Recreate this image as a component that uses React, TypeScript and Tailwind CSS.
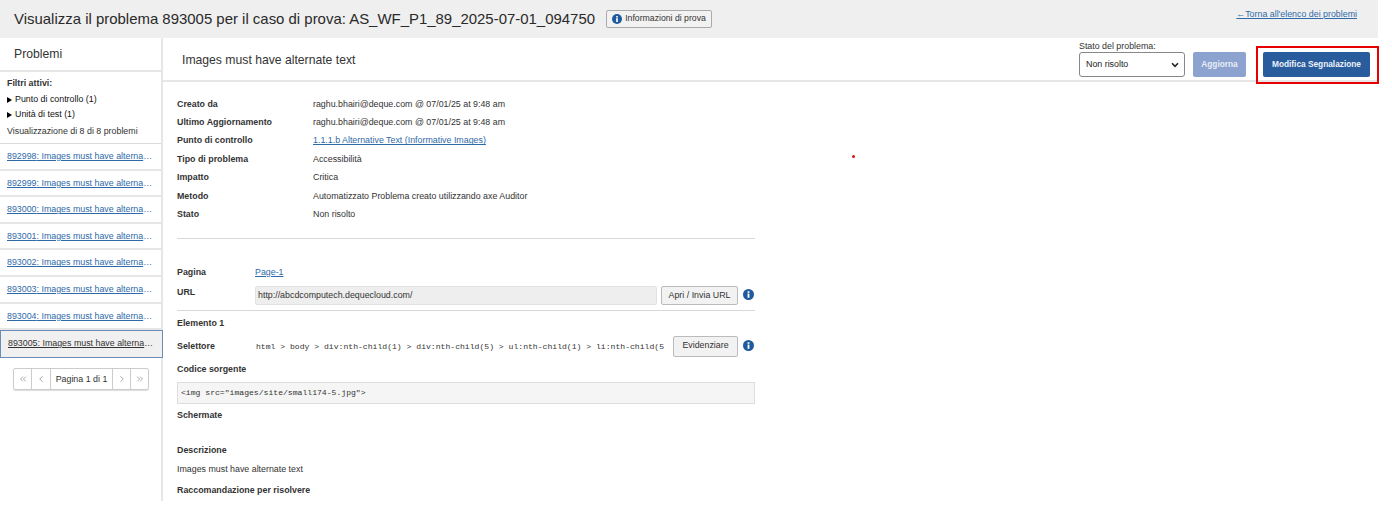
import React from "react";
import { ChevronsLeft, ChevronLeft, ChevronRight, ChevronsRight } from "lucide-react";

const issues = ["892998", "892999", "893000", "893001", "893002", "893003", "893004"];

const details = [
  { label: "Creato da", value: "raghu.bhairi@deque.com @ 07/01/25 at 9:48 am" },
  { label: "Ultimo Aggiornamento", value: "raghu.bhairi@deque.com @ 07/01/25 at 9:48 am" },
  { label: "Punto di controllo", value: "1.1.1.b Alternative Text (Informative Images)", link: true },
  { label: "Tipo di problema", value: "Accessibilità" },
  { label: "Impatto", value: "Critica" },
  { label: "Metodo", value: "Automatizzato Problema creato utilizzando axe Auditor" },
  { label: "Stato", value: "Non risolto" },
];

function InfoIcon({ size = 11 }: { size?: number }) {
  return (
    <svg width={size} height={size} viewBox="0 0 12 12" className="shrink-0">
      <circle cx="6" cy="6" r="6" fill="#1f5a9e" />
      <rect x="5" y="5" width="2" height="4.6" fill="#fff" />
      <rect x="5" y="2.4" width="2" height="1.8" fill="#fff" />
    </svg>
  );
}

function Sidebar() {
  return (
    <aside className="w-[163px] shrink-0 border-r-2 border-[#e6e6e6]">
      <div className="h-[34px] border-b-2 border-[#e6e6e6] pl-[14px] pt-[8px] text-[12.2px] leading-[16px] text-[#333]">
        Problemi
      </div>
      <div className="h-[72px] border-b border-[#dcdcdc] pl-[7px] pt-[4px] text-[8.85px] leading-[15px] text-[#333]">
        <div className="font-bold">Filtri attivi:</div>
        <div className="mt-[1px] flex items-center gap-[3px] text-[#111]">
          <span className="h-0 w-0 border-y-[3.5px] border-l-[5px] border-y-transparent border-l-black" />
          <span className="font-medium">Punto di controllo (1)</span>
        </div>
        <div className="flex items-center gap-[3px] text-[#111]">
          <span className="h-0 w-0 border-y-[3.5px] border-l-[5px] border-y-transparent border-l-black" />
          <span className="font-medium">Unità di test (1)</span>
        </div>
        <div className="mt-[2px]">Visualizzazione di 8 di 8 problemi</div>
      </div>
      {issues.map((id) => (
        <div key={id} className="h-[26.6px] border-b-2 border-[#e6e6e6] pl-[7px] pr-[8px] pt-[5px]">
          <a className="block truncate text-[8.85px] leading-[14px] text-[#2f6aa8] underline">
            {id}: Images must have alternate text
          </a>
        </div>
      ))}
      <div className="h-[28px] w-[163px] border border-[#6a8db5] bg-[#f0f0f0] pl-[7px] pr-[7px] pt-[5px]">
        <a className="block truncate text-[8.85px] leading-[14px] text-[#333] underline">
          893005: Images must have alternate text
        </a>
      </div>
      <div className="ml-[13px] mt-[10px] flex h-[22px] w-[136px] rounded-[2px] border border-[#ccc] text-[#999] shadow-[0_1px_1px_#ddd]">
        <span className="flex w-[18px] items-center justify-center border-r border-[#ccc]"><ChevronsLeft size={10} /></span>
        <span className="flex w-[19px] items-center justify-center border-r border-[#ccc]"><ChevronLeft size={10} /></span>
        <span className="flex flex-1 items-center justify-center border-r border-[#ccc] text-[8.85px] text-[#333]">Pagina 1 di 1</span>
        <span className="flex w-[18px] items-center justify-center border-r border-[#ccc]"><ChevronRight size={10} /></span>
        <span className="flex w-[17px] items-center justify-center"><ChevronsRight size={10} /></span>
      </div>
    </aside>
  );
}

function Toolbar() {
  return (
    <div className="flex h-[44px] items-start justify-between border-b-2 border-[#e6e6e6]">
      <div className="pl-[19px] pt-[14px] text-[12.2px] leading-[16px] text-[#333]">Images must have alternate text</div>
      <div className="flex items-start pr-[8px]">
        <div className="w-[106px] pt-[3px]">
          <div className="text-[8.85px] leading-[11px] text-[#333]">Stato del problema:</div>
          <div className="flex h-[25px] items-center justify-between rounded-[3px] border border-[#888] pl-[6px] pr-[5px] text-[8.85px] text-[#222]">
            Non risolto
            <svg width="8" height="6" viewBox="0 0 8 6"><path d="M1 1.2 4 4.4 7 1.2" fill="none" stroke="#222" strokeWidth="1.6" /></svg>
          </div>
        </div>
        <div className="ml-[8px] mt-[14px] flex h-[25px] w-[53px] items-center justify-center rounded-[2px] bg-[#8ba3ce] text-[8.3px] font-bold text-[#e8edf6]">
          Aggiorna
        </div>
        <div className="ml-[17px] mt-[14px] flex h-[25px] w-[107px] items-center justify-center whitespace-nowrap rounded-[2px] bg-[#285c9c] text-[8.3px] font-bold text-[#eef2f8]">
          Modifica Segnalazione
        </div>
      </div>
    </div>
  );
}

function Details() {
  return (
    <div className="w-[578px] text-[8.85px] text-[#333]">
      <div className="border-b border-[#d8d8d8] pb-[14px] pt-[13px]">
        {details.map((d) => (
          <div key={d.label} className="flex h-[18.45px] items-center">
            <span className="w-[136px] font-bold">{d.label}</span>
            {d.link ? <a className="text-[#2f6aa8] underline">{d.value}</a> : <span>{d.value}</span>}
          </div>
        ))}
      </div>
      <div className="mt-[26px] flex h-[15px] items-center">
        <span className="w-[78px] font-bold">Pagina</span>
        <a className="text-[#2f6aa8] underline">Page-1</a>
      </div>
      <div className="mt-[6px] flex items-center border-b border-[#d8d8d8] pb-[5px]">
        <span className="w-[78px] pb-[7px] font-bold leading-[12px]">URL</span>
        <div className="flex h-[19px] w-[402px] items-center rounded-[2px] border border-[#e2e2e2] bg-[#eeeeee] pl-[2px]">
          http://abcdcomputech.dequecloud.com/
        </div>
        <div className="ml-[4px] flex h-[19px] w-[77px] items-center justify-center rounded-[2px] border border-[#bbb] bg-[#f2f2f2] text-[#333]">
          Apri / Invia URL
        </div>
        <span className="ml-[5px] pb-[2px]"><InfoIcon /></span>
      </div>
      <div className="mt-[5px] h-[14px] font-bold leading-[14px]">Elemento 1</div>
      <div className="mt-[5px] flex h-[22px] items-center">
        <span className="w-[79px] pt-[1px] font-bold">Selettore</span>
        <code className="w-[409px] overflow-hidden whitespace-nowrap pt-[2px] font-['Liberation_Mono',monospace] text-[8.1px]">
          html &gt; body &gt; div:nth-child(1) &gt; div:nth-child(5) &gt; ul:nth-child(1) &gt; li:nth-child(5) &gt; a
        </code>
        <div className="ml-[8px] flex h-[21px] w-[65px] items-center justify-center rounded-[2px] border border-[#bbb] bg-[#f2f2f2]">
          Evidenziare
        </div>
        <span className="ml-[5px] pb-[1px]"><InfoIcon /></span>
      </div>
      <div className="mt-[5px] h-[14px] font-bold leading-[14px]">Codice sorgente</div>
      <code className="mt-[6px] flex h-[22px] items-center border border-[#ddd] bg-[#f5f5f5] pl-[3px] font-['Liberation_Mono',monospace] text-[8.1px]">
        &lt;img src="images/site/small174-5.jpg"&gt;
      </code>
      <div className="mt-[4px] h-[14px] font-bold leading-[14px]">Schermate</div>
      <div className="mt-[21px] h-[14px] font-bold leading-[14px]">Descrizione</div>
      <div className="mt-[5px] h-[14px] leading-[14px]">Images must have alternate text</div>
      <div className="mt-[7px] h-[14px] font-bold leading-[14px]">Raccomandazione per risolvere</div>
    </div>
  );
}

export default function App() {
  return (
    <div className="relative h-[513px] w-[1392px] overflow-hidden bg-white font-['Liberation_Sans',Arial,sans-serif]">
      <div className="w-[1378px]">
        <header className="flex h-[38px] items-start justify-between bg-[#efefef]">
          <div className="flex items-center pl-[14px] pt-[9px]">
            <h1 className="text-[14.95px] leading-[19px] text-[#2a2a2a]">
              Visualizza il problema 893005 per il caso di prova: AS_WF_P1_89_2025-07-01_094750
            </h1>
            <div className="ml-[11px] flex h-[18px] w-[106px] items-center justify-center gap-[3px] rounded-[2px] border border-[#aaa] bg-[#f2f2f2] text-[8.7px] text-[#333]">
              <InfoIcon size={10} />
              Informazioni di prova
            </div>
          </div>
          <a className="pr-[21px] pt-[8px] text-[8.85px] leading-[12px] text-[#2f6aa8] underline">←Torna all'elenco dei problemi</a>
        </header>
        <div className="flex h-[463px] overflow-hidden">
          <Sidebar />
          <main className="min-w-0 flex-1">
            <Toolbar />
            <div className="pl-[14px]">
              <Details />
            </div>
          </main>
        </div>
      </div>
      {/* annotation overlays from the screenshot */}
      <div className="absolute left-[1256px] top-[46px] h-[38px] w-[123px] border-2 border-[#e60000]" />
      <div className="absolute left-[852px] top-[155px] h-[3px] w-[3px] rounded-full bg-[#e01010]" />
    </div>
  );
}
